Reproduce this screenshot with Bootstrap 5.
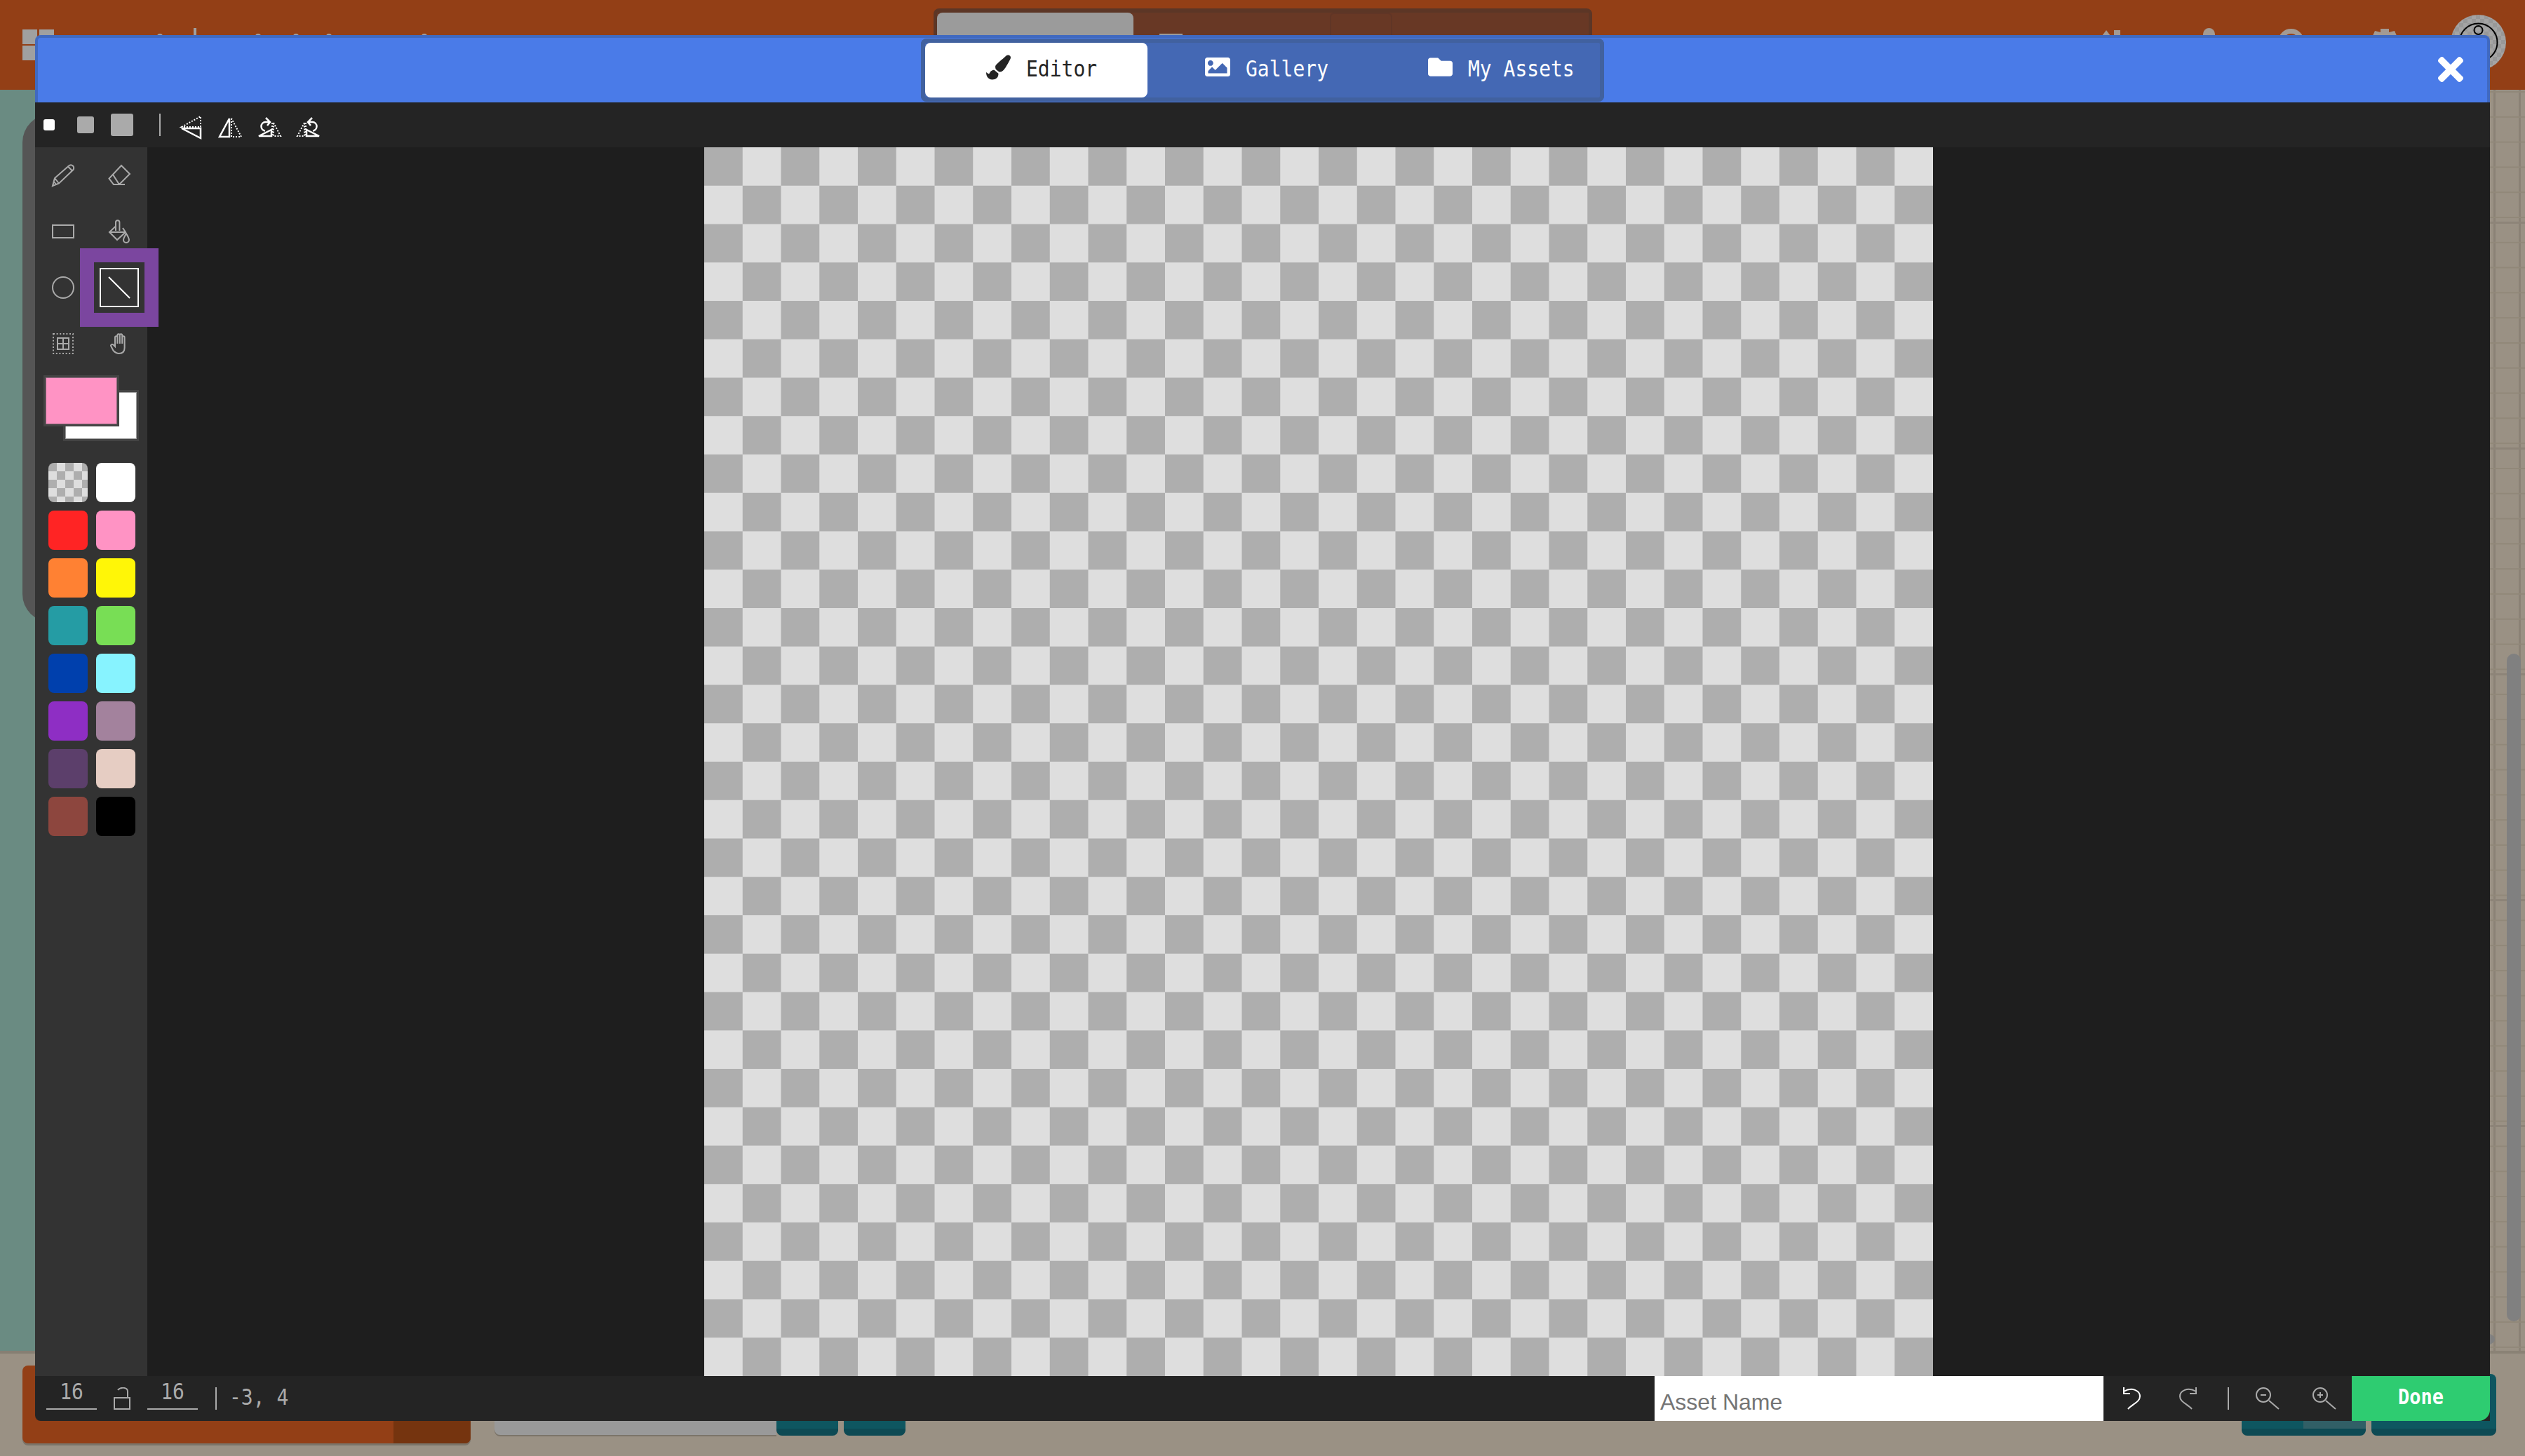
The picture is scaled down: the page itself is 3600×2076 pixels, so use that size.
<!DOCTYPE html>
<html lang="en">
<head>
  <meta charset="UTF-8">
  <title>Asset Editor</title>
  <meta name="viewport" content="width=device-width, initial-scale=1">
  <link href="https://cdn.jsdelivr.net/npm/bootstrap@5.3.0/dist/css/bootstrap.min.css" rel="stylesheet">
  <style>
    body { width: 3600px; height: 2076px; overflow: hidden; background: #9a9184; position: relative; }

    /* page behind the editor */
    .bg-top { height: 128px; background: #933f16; }
    .top-logo { margin: 42px 0 0 32px; width: 45px; display: grid; grid-template-columns: 21px 21px; gap: 2px 3px; align-self: flex-start; }
    .top-logo i { display: block; height: 21px; background: #a0a0a0; }
    .top-dot { width: 8px; height: 10px; margin-top: 48px; background: #a0a0a0; border-radius: 4px 4px 0 0; }
    .top-dot-1 { margin-left: 147px; }
    .top-rule { width: 4px; height: 12px; margin: 40px 0 0 44px; background: #a0a0a0; }
    .top-dot-2 { margin-left: 84px; }
    .top-dot-3 { margin-left: 46px; }
    .top-dot-4 { margin-left: 39px; }
    .top-dot-5 { margin-left: 128px; }
    .top-tabs { margin: 12px 0 0 722px; width: 939px; height: 40px; padding: 6px 5px 0; background: #5c3626; border-radius: 8px 8px 0 0; }
    .top-tabs-in { height: 100%; background: #683825; }
    .top-tab-on { width: 280px; background: #9b9b9b; border-radius: 8px 8px 0 0; }
    .top-tab-sq { width: 33px; height: 4px; margin: 30px 0 0 37px; background: #9b9b9b; }
    .top-tab-box { width: 89px; margin-left: 210px; border: 2px solid #603526; border-radius: 6px 6px 0 0; }
    .top-ic { background: #a39a93; flex-shrink: 0; }
    .top-ic-1 { width: 29px; height: 12px; margin: 43px 0 0 724px; background: none; fill: #a39a93; }
    .top-ic-2 { width: 17px; height: 14px; margin: 40px 0 0 118px; border-radius: 9px 9px 0 0; }
    .top-ic-3 { width: 37px; height: 37px; margin: 41px 0 0 90px; background: none; border: 7px solid #a39a93; border-radius: 50%; }
    .top-ic-4 { width: 36px; height: 12px; margin: 41px 0 0 97px; background: none; fill: #a39a93; }
    .top-avatar { width: 79px; height: 79px; margin: 21px 0 0 76px; border-radius: 50%; background: repeating-conic-gradient(#a4a4a4 0 25%, #989898 0 50%) 0 0 / 12px 12px; flex-shrink: 0; }

    .bg-mid { height: 1802px; }
    .bg-teal { width: 800px; padding: 35px 0 0 32px; background: #6a8b82; border-bottom: 4px solid #867f73; }
    .bg-panel { height: 724px; background: #555; border-radius: 40px 0 0 40px; }
    .bg-grid {
      position: relative;
      padding: 804px 6px 0 0;
      background:
        linear-gradient(#8d8478 3px, transparent 3px) 0 1154px / 100% 322px,
        linear-gradient(#918879 2px, transparent 2px) 0 2px / 100% 35.8px,
        linear-gradient(90deg, #8b8276 3px, transparent 3px) 19px 0 / 36px 100%,
        #9a9184;
      border-bottom: 4px solid #8a8275;
    }
    .bg-thumb { width: 20px; height: 952px; background: #808080; border-radius: 10px; }
    .bg-oval { position: absolute; left: 2720px; top: 1772px; width: 37px; height: 19px; background: #808080; border-radius: 50%; }

    .bg-bottom { height: 146px; padding-top: 17px; }
    .bg-orange { width: 639px; height: 111px; margin-left: 32px; background: #933f16; border-radius: 8px; box-shadow: 0 3px 0 rgba(0,0,0,.2); overflow: hidden; }
    .bg-orange i { display: block; width: 110px; background: #75340f; }
    .bg-gray { width: 402px; height: 99px; margin-left: 34px; background: #999; border-radius: 0 0 0 8px; box-shadow: 0 2px 0 rgba(0,0,0,.2); }
    .bg-teal-btn { width: 88px; height: 100px; background: #0e5660; border-bottom: 10px solid #0d4a54; border-radius: 0 0 8px 8px; }
    .bg-teal-2 { margin-left: 8px; }
    .bg-teal-3 { width: 177px; margin-left: 1905px; overflow: hidden; }
    .bg-teal-3 i { display: block; width: 89px; background: #315f66; }
    .bg-teal-4 { width: 178px; height: 88px; margin: 12px 0 0 8px; border-radius: 8px; }

    /* editor window */
    .editor-win { position: absolute; left: 50px; top: 50px; width: 3500px; height: 1976px; }
    .editor-head { height: 96px; background: #4a7be8; border: solid #4069c0; border-width: 4px 4px 0; border-radius: 8px 8px 0 0; }
    .editor-head-grid { display: grid; grid-template-columns: 1fr auto 1fr; height: 100%; }
    .tab-bar { width: 974px; height: 90px; margin-top: 1px; padding: 6px; background: #4468b4; border: 0; box-shadow: inset 0 0 0 6px #41619f; border-radius: 8px; }
    .tab-btn { height: 78px; padding: 0 0 9px; color: #fff; background: transparent; font: 28px "DejaVu Sans Mono", monospace; }
    .tab-btn svg { fill: currentColor; margin-right: 22px; }
    .tab-btn span { display: inline-block; transform: scaleY(1.13); margin-top: 5px; }
    .tab-editor { width: 317px; padding-left: 87px; background: #fff; color: #242424; border-radius: 8px; }
    .tab-editor:hover { background: #fff; color: #242424; }
    .tab-gallery { width: 328px; padding-left: 82px; }
    .tab-assets { width: 317px; padding-left: 72px; }
    .close-x { width: 36px; height: 36px; margin: 27px 34px 0 0; fill: #fff; background: none; }

    .tool-bar { height: 64px; padding: 12px 0 0 12px; background: #242424; }
    .size-dot { background: #aaa; border-radius: 3px; }
    .size-s { width: 16px; height: 16px; margin-top: 12px; background: #fff; }
    .size-m { width: 24px; height: 24px; margin: 8px 0 0 32px; }
    .size-l { width: 32px; height: 32px; margin: 4px 0 0 24px; }
    .bar-rule { width: 2px; height: 32px; background: #aaa; }
    .tool-bar .bar-rule { margin: 4px 0 0 37px; }
    .flip-ic { width: 36px; height: 36px; margin-top: 7px; fill: none; stroke: #fff; stroke-width: 2.5; }
    .flip-ic .dots { stroke-width: 2; stroke-dasharray: 2 2; }
    .flip-1 { margin-left: 27px; }
    .flip-2 { margin-left: 18px; }
    .flip-3, .flip-4 { margin-left: 20px; }

    .editor-main { height: 1752px; }
    .side-bar { width: 160px; flex-shrink: 0; background: #333; }
    .tool-grid { display: grid; grid-template-columns: 80px 80px; grid-auto-rows: 80px; place-items: center; }
    .tool-grid svg { fill: none; stroke: #aaa; stroke-width: 2; overflow: visible; }
    .tool-on { width: 72px; height: 72px; position: relative; z-index: 2; background: #333; box-shadow: 0 0 0 20px #7b469f; display: flex; align-items: center; justify-content: center; }
    .tool-grid .tool-on svg { stroke: #fff; }
    .color-stack { position: relative; height: 99px; margin-top: 5px; }
    .color-fg, .color-bg { position: absolute; width: 108px; height: 73px; border: 3px solid #444; }
    .color-fg { left: 12px; top: 0; z-index: 1; background: #ff93c4; outline: 1px solid #8a6478; outline-offset: -4px; }
    .color-bg { left: 40px; top: 21px; background: #fff; outline: 1px solid #999; outline-offset: -4px; }
    .swatch-grid { display: grid; grid-template-columns: 56px 56px; grid-auto-rows: 56px; gap: 12px; margin: 26px 0 0 19px; }
    .swatch-item { border-radius: 8px; }
    .sw-clear { background: repeating-conic-gradient(#dedede 0 25%, #aeaeae 0 50%) 0 0 / 24px 24px; }
    .art-area { background: #1e1e1e; }
    .art-board { width: 1752px; height: 1752px; background: repeating-conic-gradient(#dedede 0 25%, #aeaeae 0 50%) 0 0 / 109.5px 109.5px; }

    .status-bar { height: 64px; padding-left: 16px; background: #242424; border-radius: 0 0 0 8px; color: #aaa; font: 28px "DejaVu Sans Mono", monospace; }
    .dim-field { width: 72px; height: 42px; margin-top: 6px; border-bottom: 2px solid #aaa; text-align: center; line-height: 34px; }
    .dim-field span, .coord-txt { display: inline-block; transform: scaleY(1.13); }
    .lock-ic { width: 24px; height: 32px; margin: 16px 24px 0; fill: none; stroke: #aaa; stroke-width: 2; }
    .status-bar .bar-rule { margin: 16px 0 0 25px; }
    .coord-txt { margin: 13px 0 0 18px; line-height: 36px; }
    .name-input { width: 640px; height: 64px; padding: 11px 0 0 8px; border: 0; border-radius: 0; font: 32px "Liberation Sans", Arial, sans-serif; }
    .name-input::placeholder { color: #757575; opacity: 1; }
    .status-ic { margin-top: 16px; fill: none; stroke: #aaa; stroke-width: 2; }
    .ic-undo { width: 26px; height: 32px; margin-left: 27px; stroke: #fff; }
    .ic-redo { width: 26px; height: 32px; margin-left: 55px; }
    .status-bar .rule-2 { margin: 16px 0 0 43px; }
    .ic-zoom-out { width: 34px; height: 32px; margin-left: 38px; }
    .ic-zoom-in { width: 34px; height: 32px; margin-left: 47px; }
    .done-btn { width: 197px; height: 64px; margin-left: 22px; padding: 0 0 5px; border: 0; border-radius: 0 0 16px 0; background: #2ecc71; color: #fff; font: bold 27px "DejaVu Sans Mono", monospace; }
    .done-btn:hover { background: #2ecc71; color: #fff; }
    .done-btn span { display: inline-block; transform: scaleY(1.1); }
  </style>
</head>
<body>
  <!-- page behind the editor -->
  <div class="bg-top d-flex">
    <div class="top-logo"><i></i><i></i><i></i><i></i></div>
    <div class="top-dot top-dot-1"></div>
    <div class="top-rule"></div>
    <div class="top-dot top-dot-2"></div>
    <div class="top-dot top-dot-3"></div>
    <div class="top-dot top-dot-4"></div>
    <div class="top-dot top-dot-5"></div>
    <div class="top-tabs">
      <div class="top-tabs-in d-flex">
        <div class="top-tab-on"></div>
        <div class="top-tab-sq"></div>
        <div class="top-tab-box"></div>
      </div>
    </div>
    <svg class="top-ic top-ic-1" viewBox="0 0 29 12"><path d="M0 12 L9 0 L18 12 Z M20 0 H29 V12 H20 Z"/></svg>
    <div class="top-ic top-ic-2"></div>
    <div class="top-ic top-ic-3"></div>
    <svg class="top-ic top-ic-4" viewBox="0 0 36 12"><path d="M12 0 H24 V5 L32 3 L36 12 H0 L4 3 L12 5 Z"/></svg>
    <div class="top-avatar">
      <svg width="79" height="79" viewBox="0 0 79 79" fill="none" stroke="#000" stroke-width="2"><circle cx="39.5" cy="39.5" r="27"/><circle cx="39.5" cy="22" r="6"/></svg>
    </div>
  </div>
  <div class="bg-mid d-flex">
    <div class="bg-teal"><div class="bg-panel"></div></div>
    <div class="bg-grid flex-grow-1 d-flex justify-content-end">
      <div class="bg-oval"></div>
      <div class="bg-thumb"></div>
    </div>
  </div>
  <div class="bg-bottom d-flex align-items-start">
    <div class="bg-orange d-flex justify-content-end"><i></i></div>
    <div class="bg-gray"></div>
    <div class="bg-teal-btn"></div>
    <div class="bg-teal-btn bg-teal-2"></div>
    <div class="bg-teal-btn bg-teal-3 d-flex justify-content-end"><i></i></div>
    <div class="bg-teal-btn bg-teal-4"></div>
  </div>

  <!-- editor window -->
  <div class="editor-win d-flex flex-column">
    <div class="editor-head">
      <div class="editor-head-grid">
        <div></div>
        <div class="tab-bar d-flex">
          <button class="btn tab-btn tab-editor d-flex align-items-center border-0">
            <svg width="35" height="36" viewBox="0 0 512 512"><path d="M167.02 309.34c-40.12 2.58-76.53 17.86-97.19 72.3-2.35 6.21-8 9.98-14.59 9.98-11.11 0-45.46-27.67-55.25-34.35C0 439.62 37.93 512 128 512c75.86 0 128-43.77 128-120.19 0-3.11-.65-6.08-.97-9.13l-88.01-73.34zM457.89 0c-15.16 0-29.37 6.71-40.21 16.45C213.27 199.05 192 203.34 192 257.09c0 13.7 3.25 26.76 8.73 38.7l63.82 53.18c7.21 1.8 14.64 3.03 22.39 3.03 62.11 0 98.11-45.47 211.16-256.46 7.38-14.35 13.9-29.85 13.9-45.99C512 20.64 486 0 457.89 0z"/></svg>
            <span>Editor</span>
          </button>
          <button class="btn tab-btn tab-gallery d-flex align-items-center border-0">
            <svg width="36" height="27" viewBox="0 64 512 384"><path d="M464 448H48c-26.51 0-48-21.49-48-48V112c0-26.51 21.49-48 48-48h416c26.51 0 48 21.49 48 48v288c0 26.51-21.49 48-48 48zM112 120c-30.928 0-56 25.072-56 56s25.072 56 56 56 56-25.072 56-56-25.072-56-56-56zM64 384h384V272l-87.515-87.515c-4.686-4.686-12.284-4.686-16.971 0L208 320l-55.515-55.515c-4.686-4.686-12.284-4.686-16.971 0L64 336v48z"/></svg>
            <span>Gallery</span>
          </button>
          <button class="btn tab-btn tab-assets d-flex align-items-center border-0">
            <svg width="35" height="27" viewBox="0 64 512 384"><path d="M464 128H272l-64-64H48C21.49 64 0 85.49 0 112v288c0 26.51 21.49 48 48 48h416c26.51 0 48-21.49 48-48V176c0-26.51-21.49-48-48-48z"/></svg>
            <span>My Assets</span>
          </button>
        </div>
        <div class="d-flex justify-content-end">
          <svg class="close-x" viewBox="0 80 352 352"><path d="M242.72 256l100.07-100.07c12.28-12.28 12.28-32.19 0-44.48l-22.24-22.24c-12.28-12.28-32.19-12.28-44.48 0L176 189.28 75.93 89.21c-12.28-12.28-32.19-12.28-44.48 0L9.21 111.45c-12.28 12.28-12.28 32.19 0 44.48L109.28 256 9.21 356.07c-12.28 12.28-12.28 32.19 0 44.48l22.24 22.24c12.28 12.28 32.2 12.28 44.48 0L176 322.72l100.07 100.07c12.28 12.28 32.2 12.28 44.48 0l22.24-22.24c12.28-12.28 12.28-32.19 0-44.48L242.72 256z"/></svg>
        </div>
      </div>
    </div>

    <div class="tool-bar d-flex align-items-start">
      <div class="size-dot size-s"></div>
      <div class="size-dot size-m"></div>
      <div class="size-dot size-l"></div>
      <div class="bar-rule"></div>
      <svg class="flip-ic flip-1" viewBox="0 0 36 36"><path class="dots" d="M3 16 L30 1 V16 Z"/><path d="M3 18 H30 V32 Z"/></svg>
      <svg class="flip-ic flip-2" viewBox="0 0 36 36"><path d="M17 4 L3 30 H17 Z"/><path class="dots" d="M20 4 V30 H34 Z"/></svg>
      <svg class="flip-ic flip-3" viewBox="0 0 36 36"><path d="M3 29 L21 20 V29 Z"/><path class="dots" d="M24 10 L34 29 H24 Z"/><path class="dots" d="M22 10 V29"/><path d="M18 9 H12 A6.3 6.3 0 0 0 12 21.5 M13 3 L19 9 L15 14"/></svg>
      <svg class="flip-ic flip-4" viewBox="0 0 36 36"><g transform="matrix(-1 0 0 1 36 0)"><path d="M3 29 L21 20 V29 Z"/><path class="dots" d="M24 10 L34 29 H24 Z"/><path class="dots" d="M22 10 V29"/><path d="M18 9 H12 A6.3 6.3 0 0 0 12 21.5 M13 3 L19 9 L15 14"/></g></svg>
    </div>

    <div class="editor-main d-flex">
      <div class="side-bar">
        <div class="tool-grid">
          <svg width="32" height="32" viewBox="0 0 32 32"><path d="M1 31 L4 20 L24 2.5 a4 4 0 0 1 6 6 L10 27.5 Z M4 20 L10 27.5 M3 25 L6 29 M23 3.5 L29 9.5"/></svg>
          <svg width="32" height="30" viewBox="0 0 32 30"><path d="M19 1 L31 13 L16 28 H8 L1.5 19.5 Z M7 14 L16 28 M16 28 H24"/></svg>
          <svg width="32" height="20" viewBox="0 0 32 20"><rect x="1" y="1" width="30" height="18"/></svg>
          <svg width="30" height="32" viewBox="0 0 30 32"><path d="M9.5 9 L1 17 L12 28 L24 17 L20 11 M10 15 V3 a2.7 2.7 0 0 1 5.4 0 V15 M1 17 H24 M25 19 C22 24 21 26 21 28 a4 4 0 0 0 8 0 C29 26 28 24 25 19Z"/></svg>
          <svg width="32" height="32" viewBox="0 0 32 32"><circle cx="16" cy="16" r="15"/></svg>
          <div class="tool-on">
            <svg width="56" height="56" viewBox="0 0 56 56"><rect x="1" y="1" width="54" height="54"/><path d="M13 13 L43 43"/></svg>
          </div>
          <svg width="30" height="30" viewBox="0 0 30 30"><rect x="1" y="1" width="28" height="28" stroke-dasharray="2 2.6"/><path d="M7 7 H23 V23 H7 Z M15 7 V23 M7 15 H23"/></svg>
          <svg width="26" height="30" viewBox="0 0 26 30"><path d="M7 19 V6 a1.7 1.7 0 0 1 3.4 0 V15 V3 a1.7 1.7 0 0 1 3.4 0 V15 V3 a1.7 1.7 0 0 1 3.4 0 V15 V6 a1.7 1.7 0 0 1 3.4 0 V21 c0 5-3 8-8 8 c-4 0-6-2-8-4 L1.5 19 c-1.5-2 1-4 3-2.5 Z"/></svg>
        </div>
        <div class="color-stack">
          <div class="color-fg"></div>
          <div class="color-bg"></div>
        </div>
        <div class="swatch-grid" id="swatches"></div>
      </div>
      <div class="art-area flex-grow-1 d-flex justify-content-center">
        <div class="art-board"></div>
      </div>
    </div>

    <div class="status-bar d-flex align-items-start">
      <div class="dim-field"><span>16</span></div>
      <svg class="lock-ic" viewBox="0 0 24 32"><rect x="1" y="15" width="22" height="16"/><path d="M6 4 C10 -1 20 0 20 6 V15"/></svg>
      <div class="dim-field"><span>16</span></div>
      <div class="bar-rule"></div>
      <div class="coord-txt">-3, 4</div>
      <input class="form-control name-input ms-auto" type="text" placeholder="Asset Name">
      <svg class="status-ic ic-undo" viewBox="0 0 26 32"><path d="M8 31 C14 24 25 21 25 13 C25 5 14 -1 2 6 M2 0 V9 H11"/></svg>
      <svg class="status-ic ic-redo" viewBox="0 0 26 32"><g transform="matrix(-1 0 0 1 26 0)"><path d="M8 31 C14 24 25 21 25 13 C25 5 14 -1 2 6 M2 0 V9 H11"/></g></svg>
      <div class="bar-rule rule-2"></div>
      <svg class="status-ic ic-zoom-out" viewBox="0 0 34 32"><circle cx="11" cy="11" r="10"/><path d="M19 19 L33 31 M7 11 H15"/></svg>
      <svg class="status-ic ic-zoom-in" viewBox="0 0 34 32"><circle cx="11" cy="11" r="10"/><path d="M19 19 L33 31 M7 11 H15 M11 7 V15"/></svg>
      <button class="btn done-btn"><span>Done</span></button>
    </div>
  </div>

  <script>
    const colors = ['', '#ffffff', '#ff2424', '#ff93c4', '#ff8133', '#fff607', '#259ca4', '#78de55',
      '#0040ad', '#87f3ff', '#8e2ec4', '#a3829d', '#5c3f6b', '#e6cdc3', '#8d463e', '#000000'];
    const box = document.getElementById('swatches');
    colors.forEach(c => {
      const el = document.createElement('div');
      el.className = 'swatch-item' + (c ? '' : ' sw-clear');
      if (c) el.style.background = c;
      box.appendChild(el);
    });
  </script>
  <script src="https://cdn.jsdelivr.net/npm/bootstrap@5.3.0/dist/js/bootstrap.bundle.min.js"></script>
</body>
</html>
